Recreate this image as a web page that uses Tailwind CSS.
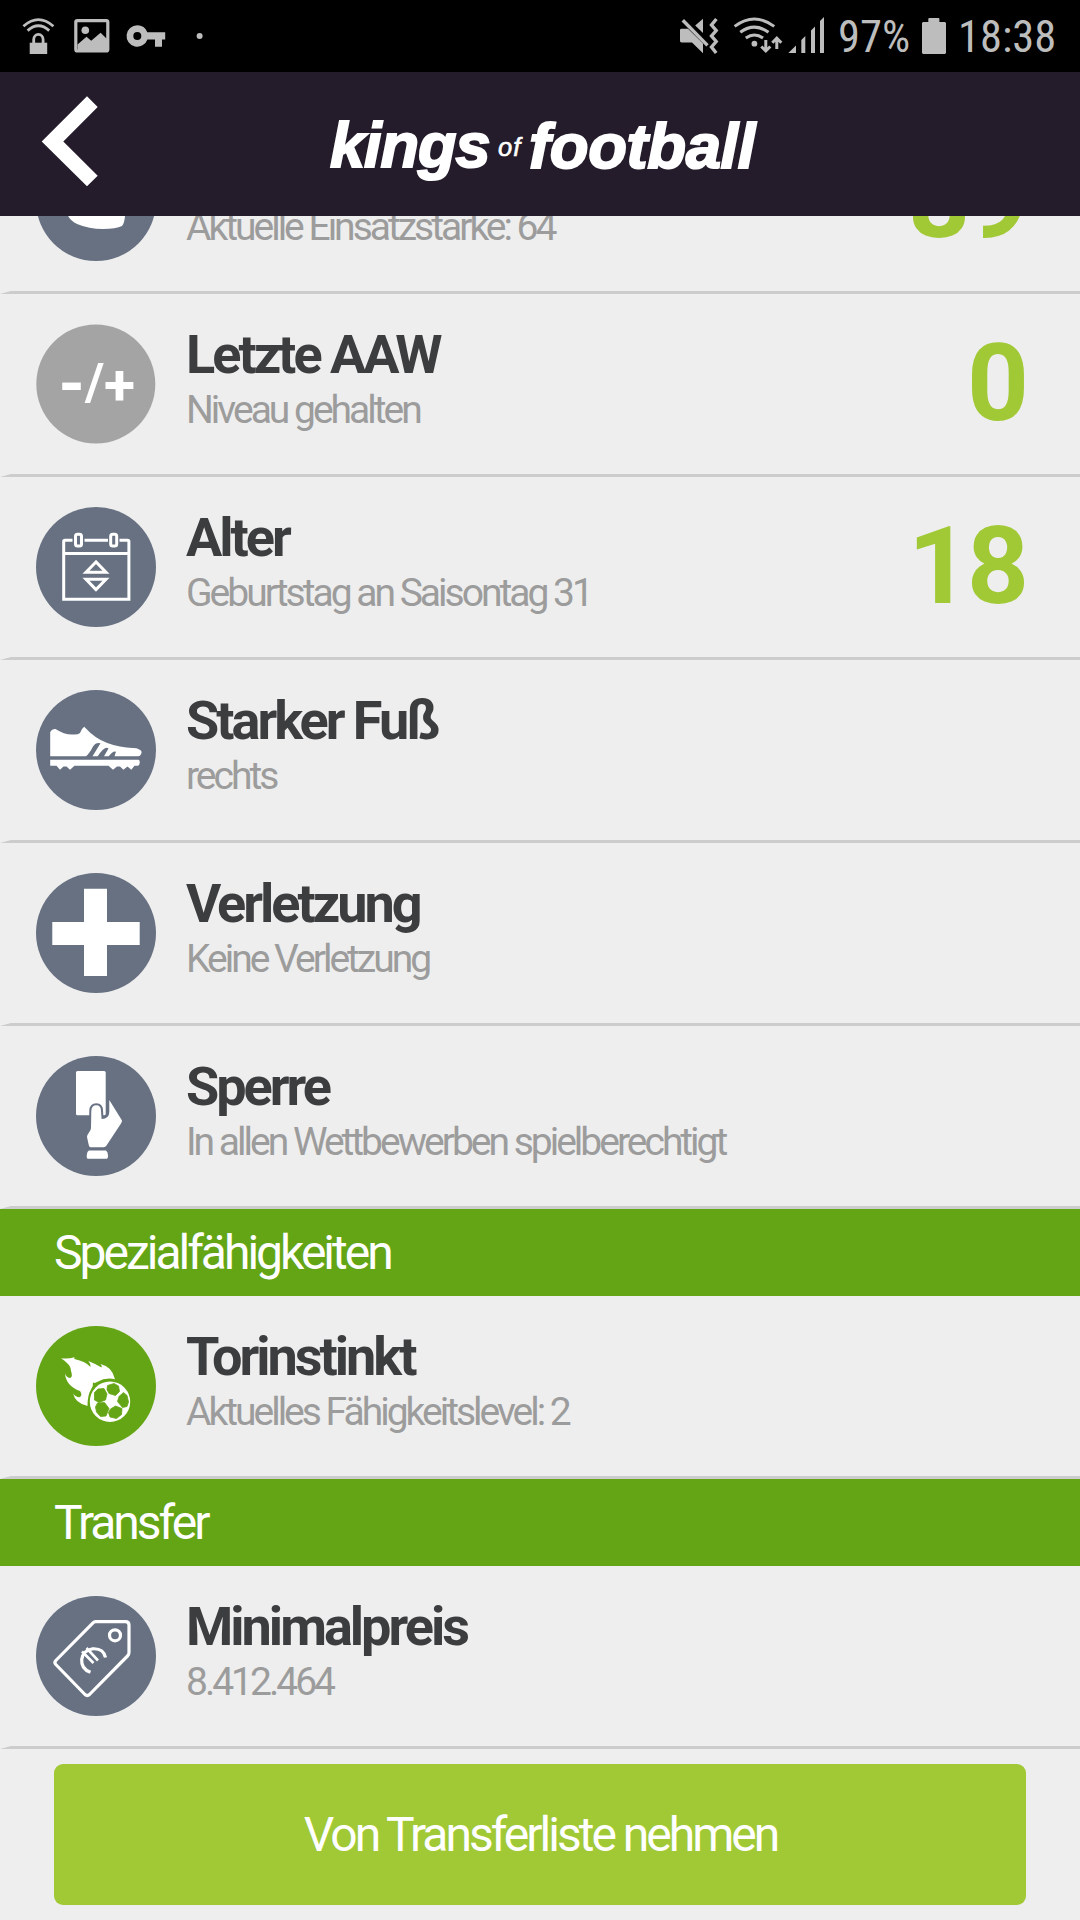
<!DOCTYPE html>
<html lang="de">
<head>
<meta charset="utf-8">
<title>Kings of Football</title>
<script src="https://cdn.jsdelivr.net/npm/@tailwindcss/browser@4"></script>
</head>
<body class="bg-[#eeeeee] font-[Roboto,sans-serif]">
<div class="flex h-[1920px] w-[1080px] flex-col overflow-hidden">

  <!-- Android status bar -->
  <div class="flex h-[72px] shrink-0 items-center bg-black text-[#bdbdbd]">
    <svg class="h-[72px] w-[210px]" viewBox="0 0 210 72" fill="currentColor">
      <g fill="none" stroke="currentColor" stroke-width="2.8">
        <path d="M23.4 26.2Q38.4 13 53.4 26.2"/>
        <path d="M27.6 30.6Q38.4 20.8 49.2 30.6"/>
        <path d="M33.7 43V39.5a4.7 5.2 0 0 1 9.4 0V43"/>
      </g>
      <path d="M29.7 42.7H47.2V54H29.7z"/>
      <rect x="75.8" y="20.6" width="32" height="30.4" rx="1.5" fill="none" stroke="currentColor" stroke-width="3.2"/>
      <circle cx="85.3" cy="30.3" r="3.8"/>
      <path d="M77.5 44.5L86.5 36.7L91.2 40.8L100.6 32.8L107 39V50.5H77.5z"/>
      <path fill-rule="evenodd" d="M137.3 25.3a10.7 10.7 0 0 1 10 7H165.2V39.4H162V46.7H155V39.4H147.4a10.7 10.7 0 1 1-10.1-14.1zM137.3 32a4 4 0 1 0 0 8a4 4 0 0 0 0-8z"/>
      <circle cx="199.6" cy="36" r="3"/>
    </svg>
    <svg class="ml-[470px] h-[72px] w-[146px] shrink-0" viewBox="680 0 146 72" fill="currentColor">
      <path d="M681.5 28.7H688L703 43.4V53.2L692 42.4H681.5Q680 42.4 680 41V30Q680 28.7 681.5 28.7z"/>
      <path d="M695.2 25.4L703 18.7V33z"/>
      <path d="M682.8 20.2L707.5 45.4" stroke="currentColor" stroke-width="3.4"/>
      <path d="M716.4 19L711.5 25L716.2 30.5L711.5 36L716.2 41.5L711.5 47L716.2 53" fill="none" stroke="currentColor" stroke-width="3.4"/>
      <g fill="none" stroke="currentColor" stroke-width="3">
        <path d="M734.6 26.4Q754.4 11.6 774.2 26.4"/>
        <path d="M740.3 32.2Q754.4 22 768.5 32.2"/>
        <path d="M745.8 38Q754.4 32 763 38"/>
        <path d="M765.8 40V51M761.3 46.5L765.8 51L770.3 46.5M776.8 49V38.2M772.3 42.7L776.8 38.2L781.3 42.7"/>
      </g>
      <circle cx="754.4" cy="43.7" r="2.9"/>
      <path d="M788.3 53L796 45.6V53zM801.3 40L805.3 36V53H801.3zM811 30.4L815 26.6V53H811zM820 21L824 17V53H820z"/>
    </svg>
    <span class="ml-[12px] w-[84px] pt-[3px] text-[44.5px] leading-none [font-stretch:75%]">97%</span>
    <svg class="h-[72px] w-[24px] shrink-0" viewBox="0 0 24 72" fill="currentColor"><path d="M6.3 22V18.8L7 18H16.7L17.4 18.8V22H23L24 23V53L23 54H1L0 53V23L1 22z"/></svg>
    <span class="ml-[12px] pt-[3px] text-[44.5px] leading-none [font-stretch:75%]">18:38</span>
  </div>

  <!-- App header -->
  <header class="flex h-[144px] shrink-0 items-center bg-[#241c2a] text-white">
    <svg class="h-[144px] w-[330px] shrink-0" viewBox="0 0 330 144" fill="currentColor"><path d="M41.7 69.4L87 24.3L97.7 35L63.3 69.4L97.7 103.7L87 114.2z"/></svg>
    <div class="flex items-baseline pt-[4px] font-['Liberation_Sans',Arial,sans-serif] font-bold italic">
      <span class="w-[168px] text-[63px] tracking-[-1px] [-webkit-text-stroke:2px_white]">kings</span>
      <span class="w-[31px] -translate-y-[11px] text-[25.5px] font-normal tracking-[1px] [-webkit-text-stroke:0.6px_white]">of</span>
      <span class="translate-y-px text-[63.5px] tracking-[-0.4px] [-webkit-text-stroke:2px_white]">football</span>
    </div>
  </header>

  <main class="h-[1704px] overflow-hidden">
    <div class="-mt-[105px] flex flex-col">

      <section class="h-[183px]">
        <div class="flex h-[180px] pl-[36px] pr-[54px]">
          <svg class="mt-[30px] size-[120px]" viewBox="0 0 120 120"><circle cx="60" cy="60" r="60" fill="#677182"/><path fill="#fff" d="M31 70Q31 78 41 83Q53 88 67 88Q80 88 86 85Q88.500 82 89 75L88 60H31z"/></svg>
          <div class="ml-[30px] flex-1 pt-[30px] tracking-[-3px]">
            <h2 class="text-[54px] leading-[61px] font-bold text-[#3c3d3f]">Stärke</h2>
            <p class="text-[39px] leading-[50px] text-[#9c9c9c]">Aktuelle Einsatzstärke: 64</p>
          </div>
          <div class="pb-[2px] text-[108px] leading-[178px] font-bold tracking-[-3px] text-[#a1c935]">89</div>
        </div>
        <div class="h-[3px] bg-[#cccccc] [clip-path:polygon(0_100%,11px_0,100%_0,100%_100%)]"></div>
      </section>

      <section class="h-[183px]">
        <div class="flex h-[180px] pl-[36px] pr-[54px]">
          <svg class="mt-[30px] size-[120px]" viewBox="0 0 120 120"><circle cx="59.800" cy="60" r="59.500" fill="#a4a4a4"/><text fill="#fff" class="font-bold"><tspan x="22.500" y="83" class="text-[67px]">-</tspan><tspan x="49" y="76" class="text-[52px]">/</tspan><tspan x="68" y="81.300" class="text-[57px]">+</tspan></text></svg>
          <div class="ml-[30px] flex-1 pt-[30px] tracking-[-3px]">
            <h2 class="text-[54px] leading-[61px] font-bold text-[#3c3d3f]">Letzte AAW</h2>
            <p class="text-[39px] leading-[50px] text-[#9c9c9c]">Niveau gehalten</p>
          </div>
          <div class="pb-[2px] text-[108px] leading-[178px] font-bold tracking-[-3px] text-[#a1c935]">0</div>
        </div>
        <div class="h-[3px] bg-[#cccccc] [clip-path:polygon(0_100%,11px_0,100%_0,100%_100%)]"></div>
      </section>

      <section class="h-[183px]">
        <div class="flex h-[180px] pl-[36px] pr-[54px]">
          <svg class="mt-[30px] size-[120px]" viewBox="0 0 120 120"><circle cx="60" cy="60" r="60" fill="#677182"/>
            <g fill="none" stroke="#fff" stroke-width="3">
              <path d="M36.500 33.200H29Q27.700 33.200 27.700 34.500V92.300H92.900V34.500Q92.900 33.200 91.500 33.200H83.500M48.500 33.200H72M27.700 46.500H92.900"/>
              <rect x="39.500" y="27.200" width="6" height="11.800" rx="2"/><rect x="74.700" y="27.200" width="6" height="11.800" rx="2"/>
              <path d="M60 55L50 65.300H70zM60 82.600L50 72.300H70z"/>
            </g></svg>
          <div class="ml-[30px] flex-1 pt-[30px] tracking-[-3px]">
            <h2 class="text-[54px] leading-[61px] font-bold text-[#3c3d3f]">Alter</h2>
            <p class="text-[39px] leading-[50px] text-[#9c9c9c]">Geburtstag an Saisontag 31</p>
          </div>
          <div class="pb-[2px] text-[108px] leading-[178px] font-bold tracking-[-3px] text-[#a1c935]">18</div>
        </div>
        <div class="h-[3px] bg-[#cccccc] [clip-path:polygon(0_100%,11px_0,100%_0,100%_100%)]"></div>
      </section>

      <section class="h-[183px]">
        <div class="flex h-[180px] pl-[36px] pr-[54px]">
          <svg class="mt-[30px] size-[120px]" viewBox="0 0 120 120"><circle cx="60" cy="60" r="60" fill="#677182"/>
            <g fill="#fff">
              <path d="M14.200 66.300V42Q16 38.500 19.500 39Q28 44.500 36 44.500Q42 45 44 43Q45.500 38.500 48.200 36.700Q54 43 60 47.300Q70 54 84 56.500Q94 58 100.500 58.200Q105.500 60 105.600 62Q105.500 65.500 102.400 66.300H78.500L80 61.700Q77 60.500 72.700 66.300H68L72.500 58.500Q69 55.500 61.700 66.300H56.500L64.500 53.300Q60 52 57 56.500Q53.500 63.500 50 66.300z"/>
              <path d="M14.200 69.700H102.500Q103.800 70 103.800 72.500Q103.500 75.300 102 75.700H98.500L95.300 79.700L91.500 76.500L87.400 79.700L84 76.500L81 76.500L77 79.700L72.500 75.700H38.500L34 79.700L30.500 76.500H27.500L24 79.700L20.500 75.700H14.200z"/>
            </g></svg>
          <div class="ml-[30px] flex-1 pt-[30px] tracking-[-3px]">
            <h2 class="text-[54px] leading-[61px] font-bold text-[#3c3d3f]">Starker Fuß</h2>
            <p class="text-[39px] leading-[50px] text-[#9c9c9c]">rechts</p>
          </div>
        </div>
        <div class="h-[3px] bg-[#cccccc] [clip-path:polygon(0_100%,11px_0,100%_0,100%_100%)]"></div>
      </section>

      <section class="h-[183px]">
        <div class="flex h-[180px] pl-[36px] pr-[54px]">
          <svg class="mt-[30px] size-[120px]" viewBox="0 0 120 120"><circle cx="60" cy="60" r="60" fill="#677182"/><path fill="#fff" d="M48 15.700H71V49H103.700V72H71V103H48V72H16.300V49H48z"/></svg>
          <div class="ml-[30px] flex-1 pt-[30px] tracking-[-3px]">
            <h2 class="text-[54px] leading-[61px] font-bold text-[#3c3d3f]">Verletzung</h2>
            <p class="text-[39px] leading-[50px] text-[#9c9c9c]">Keine Verletzung</p>
          </div>
        </div>
        <div class="h-[3px] bg-[#cccccc] [clip-path:polygon(0_100%,11px_0,100%_0,100%_100%)]"></div>
      </section>

      <section class="h-[183px]">
        <div class="flex h-[180px] pl-[36px] pr-[54px]">
          <svg class="mt-[30px] size-[120px]" viewBox="0 0 120 120"><circle cx="60" cy="60" r="60" fill="#677182"/>
            <g fill="#fff">
              <rect x="40" y="15" width="29.700" height="44.300" rx="1.500"/>
              <path stroke="#677182" stroke-width="4" paint-order="stroke" d="M55.300 55Q55.500 49.300 60.300 49.300Q65 49.300 65 55L65.600 63Q73.300 62.500 73.300 56V44L86 64.500Q86 66 85 67.500L70.500 89.500Q69.500 91.300 67.500 91.300H54.500Q53 91 52.600 88.500L51 81Q51 79 53 76.500Q55 74 55 72z"/>
              <path d="M53 94.600H70Q72 96 72 99.500Q72 102.700 70.500 102.700H51.700Q50.600 102.700 50.700 100Q51 95.500 53 94.600z"/>
            </g></svg>
          <div class="ml-[30px] flex-1 pt-[30px] tracking-[-3px]">
            <h2 class="text-[54px] leading-[61px] font-bold text-[#3c3d3f]">Sperre</h2>
            <p class="text-[39px] leading-[50px] text-[#9c9c9c]">In allen Wettbewerben spielberechtigt</p>
          </div>
        </div>
        <div class="h-[3px] bg-[#cccccc] [clip-path:polygon(0_100%,11px_0,100%_0,100%_100%)]"></div>
      </section>

      <h3 class="h-[87px] bg-[#64a516] pl-[54px] text-[48px] leading-[87px] tracking-[-3px] text-white">Spezialfähigkeiten</h3>

      <section class="h-[183px]">
        <div class="flex h-[180px] pl-[36px] pr-[54px]">
          <svg class="mt-[30px] size-[120px]" viewBox="0 0 120 120"><circle cx="60" cy="60" r="60" fill="#64a516"/>
            <path fill="#fff" d="M25 32.300Q33 33 38.500 31.200L38.300 33Q50 35.500 54.500 41Q55 38 52.300 35Q60 38 65.500 41.500Q66.500 40 64.500 38Q76 40.500 79 53.200Q70 51 61 56Q57.500 58 57 56Q57.500 60 55 63.500Q51.500 69 51.500 80Q39 77 37.200 67.500Q40 71.500 43.500 71.300Q47 69.500 44 65Q30 60 29 47.500Q31 52.500 34.500 51.800Q37 50.500 35 45Q35 38.500 25 32.300z"/>
            <circle cx="74" cy="75.700" r="20.200" fill="#fff"/>
            <g fill="#64a516" stroke="#64a516" stroke-width=".8">
              <path d="M58.500 66.500L62 63L68 62.500L71 68L69.500 74L63 76.500L58.500 74z"/>
              <path d="M71.500 59.500L78 57.500L82.500 60L83.500 65.500L79.500 69.500L73 67.500L71 63.500z"/>
              <path d="M87.500 66.500L91 69.500L92.500 76L91 80.500L86.500 81.500L81.500 75.500L83 70.500z"/>
              <path d="M74.500 83L79.500 80L86 82.500L85.500 88.500L80.500 92.500L74 91L72.500 86.500z"/>
              <path d="M61.500 77L68.500 76.500L73 82.500L70 90L64.500 90.500L60.500 86L59.500 81z"/>
            </g></svg>
          <div class="ml-[30px] flex-1 pt-[30px] tracking-[-3px]">
            <h2 class="text-[54px] leading-[61px] font-bold text-[#3c3d3f]">Torinstinkt</h2>
            <p class="text-[39px] leading-[50px] text-[#9c9c9c]">Aktuelles Fähigkeitslevel: 2</p>
          </div>
        </div>
        <div class="h-[3px] bg-[#cccccc] [clip-path:polygon(0_100%,11px_0,100%_0,100%_100%)]"></div>
      </section>

      <h3 class="h-[87px] bg-[#64a516] pl-[54px] text-[48px] leading-[87px] tracking-[-3px] text-white">Transfer</h3>

      <section class="h-[183px]">
        <div class="flex h-[180px] pl-[36px] pr-[54px]">
          <svg class="mt-[30px] size-[120px]" viewBox="0 0 120 120"><circle cx="60" cy="60" r="60" fill="#677182"/>
            <g fill="none" stroke="#fff" stroke-width="3.200">
              <path stroke-linejoin="round" d="M59.500 25.600H89.500Q93 25.600 93 29V56.500Q93 58.500 91.500 60L53.500 98.500Q51.300 100.500 49 98.500L19.800 68.500Q18 66.500 19.800 64.500L57 26.800Q58.200 25.600 59.500 25.600z"/>
              <circle cx="79" cy="39.300" r="5.500"/>
              <path d="M54.500 76.300Q45 73 45.700 63.500Q47 54.500 56.500 52.800Q67.500 52 69.500 61.500"/>
              <path d="M46 55.500L57.500 67M50.500 52L62 64.500" stroke-width="2.600"/>
            </g></svg>
          <div class="ml-[30px] flex-1 pt-[30px] tracking-[-3px]">
            <h2 class="text-[54px] leading-[61px] font-bold text-[#3c3d3f]">Minimalpreis</h2>
            <p class="text-[39px] leading-[50px] text-[#9c9c9c]">8.412.464</p>
          </div>
        </div>
        <div class="h-[3px] bg-[#cccccc] [clip-path:polygon(0_100%,11px_0,100%_0,100%_100%)]"></div>
      </section>

      <button class="mx-[54px] mt-[15px] h-[141px] rounded-[9px] bg-[#a1c935] pl-px text-[48px] leading-[141px] tracking-[-3px] text-white">Von Transferliste nehmen</button>
    </div>
  </main>
</div>
</body>
</html>
